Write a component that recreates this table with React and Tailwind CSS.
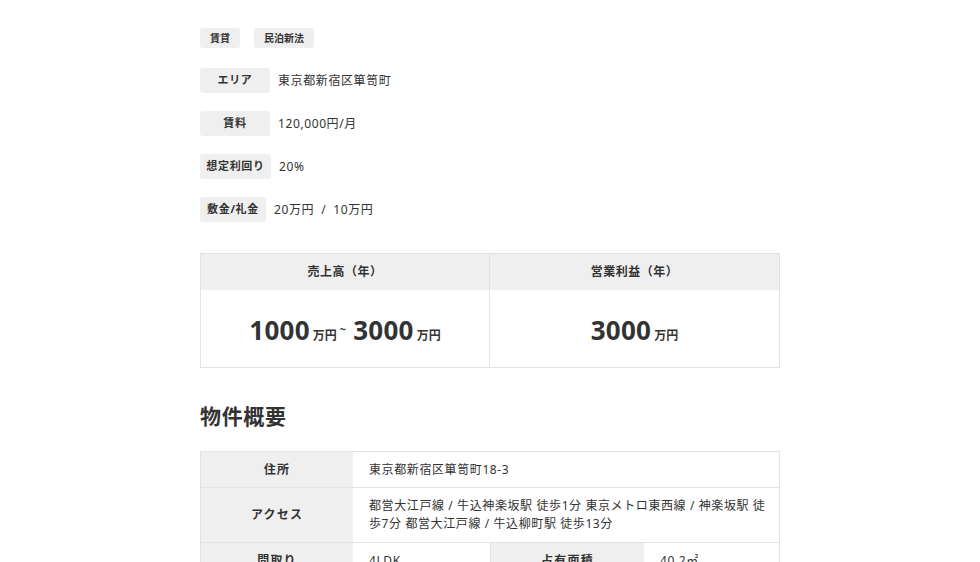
import React from 'react';

const FONT = { fontFamily: '"Noto Sans", "Noto Sans CJK JP", sans-serif' };

const tags = ['賃貸', '民泊新法'];

const infoRows = [
    { label: 'エリア', w: 'w-[70px]', value: '東京都新宿区箪笥町' },
    { label: '賃料', w: 'w-[70px]', value: '120,000円/月' },
    { label: '想定利回り', w: 'w-[71px]', value: '20%' },
    { label: '敷金/礼金', w: 'w-[66px]', value: '20万円 / 10万円' },
];

const Amount = ({ n }) => (
    <span className="inline-flex items-baseline">
        <span className="text-[26px] font-bold tracking-[0.01em] leading-none">{n}</span>
        <span className="ml-[3px] text-[12px] font-bold leading-none">万円</span>
    </span>
);

export default function App() {
    return (
        <div className="w-[980px] h-[562px] overflow-hidden bg-white text-[#333]" style={FONT}>
            <div className="w-[580px] mx-auto pt-[28px]">

                {/* Tags */}
                <div className="flex gap-[14px]">
                    {tags.map((t) => (
                        <span key={t} className="h-[20px] px-[10px] inline-flex items-center rounded-[3px] bg-[#efefef] text-[10px] font-bold">
                            {t}
                        </span>
                    ))}
                </div>

                {/* Info rows */}
                <div className="mt-[20px] flex flex-col gap-[18px]">
                    {infoRows.map((r) => (
                        <div key={r.label} className="flex items-center gap-2">
                            <span className={`${r.w} h-[25px] inline-flex items-center justify-center rounded-[3px] bg-[#efefef] text-[11px] font-bold tracking-[0.06em]`}>
                                {r.label}
                            </span>
                            {r.label === '敷金/礼金' ? (
                                <span className="text-[12px] tracking-[0.05em]">
                                    20万円<span className="mx-[7px]">/</span>10万円
                                </span>
                            ) : (
                                <span className="text-[12px] tracking-[0.05em]">{r.value}</span>
                            )}
                        </div>
                    ))}
                </div>

                {/* Sales / profit */}
                <div className="mt-[31px] grid grid-cols-2 border border-[#e2e2e2]">
                    <div className="h-[36px] flex items-center justify-center bg-[#efefef] text-[12px] font-bold tracking-[0.04em] border-r border-[#e2e2e2]">売上高（年）</div>
                    <div className="h-[36px] flex items-center justify-center bg-[#efefef] text-[12px] font-bold tracking-[0.04em]">営業利益（年）</div>
                    <div className="h-[77px] flex items-center justify-center border-r border-[#e2e2e2] pt-[2px]">
                        <Amount n="1000" />
                        <span className="ml-[3px] mr-[7px] text-[11px] font-bold self-center">~</span>
                        <Amount n="3000" />
                    </div>
                    <div className="h-[77px] flex items-center justify-center pt-[2px]">
                        <Amount n="3000" />
                    </div>
                </div>

                {/* Heading */}
                <h2 className="mt-[33px] text-[21px] font-bold leading-[30px] tracking-[0.03em]">物件概要</h2>

                {/* Spec table */}
                <div className="mt-[20px] border border-[#e2e2e2] text-[12px] tracking-[0.05em]">
                    <div className="flex border-b border-[#e2e2e2]">
                        <div className="w-[152px] h-[35px] shrink-0 flex items-center justify-center bg-[#efefef] font-bold tracking-[0.1em]">住所</div>
                        <div className="flex-1 px-4 flex items-center">東京都新宿区箪笥町18-3</div>
                    </div>
                    <div className="flex border-b border-[#e2e2e2]">
                        <div className="w-[152px] h-[54px] shrink-0 flex items-center justify-center bg-[#efefef] font-bold tracking-[0.1em]">アクセス</div>
                        <div className="flex-1 pl-4 pr-3 flex items-center leading-[18px]">
                            都営大江戸線 / 牛込神楽坂駅 徒歩1分 東京メトロ東西線 / 神楽坂駅 徒歩7分 都営大江戸線 / 牛込柳町駅 徒歩13分
                        </div>
                    </div>
                    <div className="flex">
                        <div className="w-[152px] h-[36px] shrink-0 flex items-center justify-center bg-[#efefef] font-bold tracking-[0.1em]">間取り</div>
                        <div className="w-[138px] px-4 flex items-center border-r border-[#e2e2e2]">4LDK</div>
                        <div className="w-[153px] shrink-0 flex items-center justify-center bg-[#efefef] font-bold tracking-[0.1em]">占有面積</div>
                        <div className="flex-1 px-4 flex items-center">40.2㎡</div>
                    </div>
                </div>
            </div>
        </div>
    );
}
